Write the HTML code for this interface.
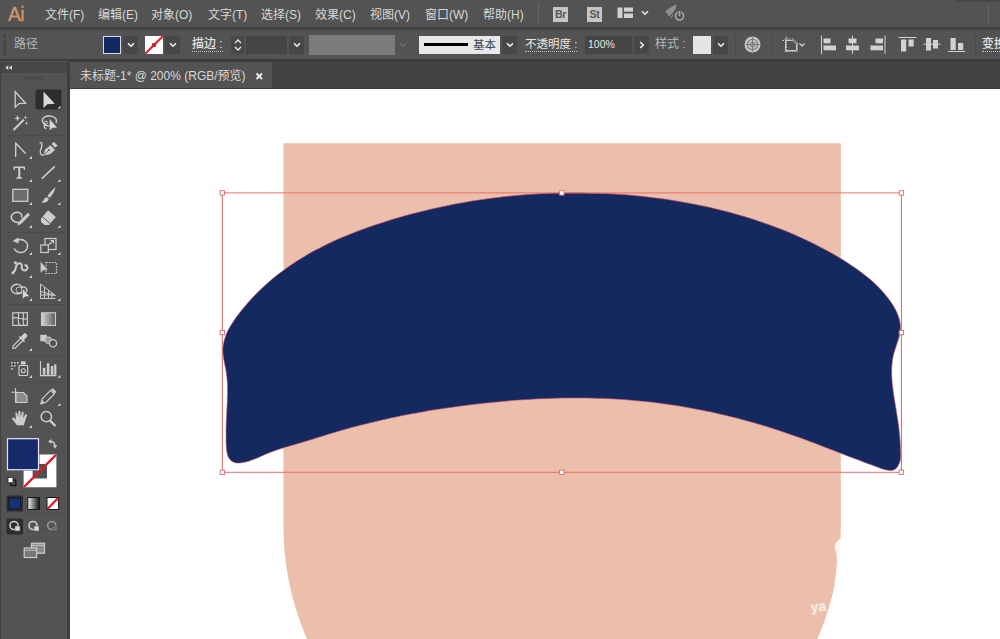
<!DOCTYPE html>
<html><head><meta charset="utf-8">
<style>
html,body{margin:0;padding:0;}
body{width:1000px;height:639px;overflow:hidden;position:relative;background:#535353;font-family:"Liberation Sans","Noto Sans CJK SC",sans-serif;font-size:12px;color:#d8d8d8;}
.abs{position:absolute;}
#menubar{left:0;top:0;width:1000px;height:28px;background:#535353;}
#menubar span.m{position:absolute;top:1px;line-height:28px;white-space:nowrap;}
#ctrl{left:0;top:29px;width:1000px;height:31px;background:#535353;}
#sep1{left:0;top:28px;width:1000px;height:1px;background:#3e3e3e;}
#sep2{left:0;top:60px;width:1000px;height:1px;background:#3a3a3a;}
#tabbar{left:70px;top:62px;width:930px;height:27px;background:#424242;}
#tab{left:70px;top:62px;width:202px;height:26px;background:#535353;}
#tabline{left:70px;top:88px;width:930px;height:1px;background:#3a3a3a;}
#canvas{left:70px;top:89px;width:930px;height:550px;background:#fff;overflow:hidden;}
#tools{left:0;top:61px;width:67px;height:578px;background:#535353;}
#toolhead{left:0;top:62px;width:67px;height:10.5px;background:#464646;}
#toolsep{left:67px;top:61px;width:3px;height:578px;background:#3e3e3e;}

#menubar{height:27px;}
#sep1{top:27px;height:3px;background:#434343;}
#ctrl{top:30px;height:29px;}
#sep2{top:59px;height:3px;background:#3c3c3c;}
.ct{position:absolute;white-space:nowrap;line-height:16px;top:36px;}
.dd{position:absolute;top:36px;height:18px;background:#474747;border-radius:0 2px 2px 0;}
.dd svg{position:absolute;left:50%;top:50%;margin:-3px 0 0 -4px;}
.inp{position:absolute;top:36px;height:18px;background:#454545;}
.ul{border-bottom:1px dotted #bbb;line-height:14px;top:37px;}
</style></head><body>
<div id="menubar" class="abs">
<span class="m" style="left:8px;top:0px;font-size:19.5px;color:#cf966a;letter-spacing:-0.8px;-webkit-text-stroke:0.3px #cf966a;">Ai</span>
<span class="m" style="left:45px">文件(F)</span>
<span class="m" style="left:98px">编辑(E)</span>
<span class="m" style="left:151px">对象(O)</span>
<span class="m" style="left:208px">文字(T)</span>
<span class="m" style="left:261px">选择(S)</span>
<span class="m" style="left:315px">效果(C)</span>
<span class="m" style="left:370px">视图(V)</span>
<span class="m" style="left:425px">窗口(W)</span>
<span class="m" style="left:483px">帮助(H)</span>
</div>
<div id="sep1" class="abs"></div>
<div id="ctrl" class="abs"></div>
<div id="ctrlitems">
<div class="abs" style="left:3px;top:33px;width:3px;height:23px;background:repeating-linear-gradient(#535353 0 1px,#3f3f3f 1px 2px);"></div>
<span class="ct" style="left:14px;color:#b4b4b4;">路径</span>
<div class="abs" style="left:103px;top:36px;width:16px;height:16px;background:#14295f;border:1px solid #d4dcec;"></div>
<div class="dd" style="left:123px;width:15px;"><svg width="8" height="6" viewBox="0 0 8 6"><path d="M1 1.2 L4 4.2 L7 1.2" fill="none" stroke="#f0f0f0" stroke-width="1.6"/></svg></div>
<div class="abs" style="left:145px;top:36px;width:18px;height:18px;background:#fff;overflow:hidden;"><svg width="18" height="18" viewBox="0 0 18 18" class="abs" style="left:0;top:0"><path d="M0 18 L18 0" stroke="#e0202c" stroke-width="2"/><circle cx="9" cy="9" r="2.3" fill="#c8202c"/></svg></div>
<div class="dd" style="left:165px;width:15px;"><svg width="8" height="6" viewBox="0 0 8 6"><path d="M1 1.2 L4 4.2 L7 1.2" fill="none" stroke="#f0f0f0" stroke-width="1.6"/></svg></div>
<span class="ct ul" style="left:192px;color:#e4e4e4;font-weight:500;">描边 :</span>
<div class="dd" style="left:231px;width:13px;border-radius:2px 0 0 2px;"><svg width="8" height="14" viewBox="0 0 8 14" style="margin:-7px 0 0 -4px"><path d="M1 5 L4 2 L7 5 M1 9 L4 12 L7 9" fill="none" stroke="#e8e8e8" stroke-width="1.4"/></svg></div>
<div class="inp" style="left:246px;width:41px;"></div>
<div class="dd" style="left:289px;width:15px;"><svg width="8" height="6" viewBox="0 0 8 6"><path d="M1 1.2 L4 4.2 L7 1.2" fill="none" stroke="#f0f0f0" stroke-width="1.6"/></svg></div>
<div class="abs" style="left:309px;top:35px;width:86px;height:20px;background:#7b7b7b;"></div>
<svg class="abs" style="left:399px;top:42px" width="8" height="6" viewBox="0 0 8 6"><path d="M1 1.2 L4 4.2 L7 1.2" fill="none" stroke="#6c6c6c" stroke-width="1.4"/></svg>
<div class="abs" style="left:419px;top:36px;width:81px;height:18px;background:#e8e8e8;"><div class="abs" style="left:5px;top:7px;width:44px;height:3px;background:#000;"></div><span class="abs" style="left:54px;top:1px;line-height:16px;color:#3a4656;font-size:11.5px;white-space:nowrap;">基本</span></div>
<div class="dd" style="left:502px;width:15px;"><svg width="8" height="6" viewBox="0 0 8 6"><path d="M1 1.2 L4 4.2 L7 1.2" fill="none" stroke="#f0f0f0" stroke-width="1.6"/></svg></div>
<span class="ct ul" style="left:525px;color:#e8e8e8;font-size:11.5px;">不透明度 :</span>
<div class="inp" style="left:585px;width:47px;"><span class="abs" style="left:3px;top:1px;line-height:14px;font-size:10.5px;color:#e6e6e6;">100%</span></div>
<div class="dd" style="left:634px;width:15px;"><svg width="6" height="8" viewBox="0 0 6 8" style="margin:-4px 0 0 -3px"><path d="M1.2 1 L4.2 4 L1.2 7" fill="none" stroke="#f0f0f0" stroke-width="1.6"/></svg></div>
<span class="ct" style="left:655px;color:#b8b8b8;">样式 :</span>
<div class="abs" style="left:693px;top:36px;width:18px;height:18px;background:#e4e4e4;"></div>
<div class="dd" style="left:713px;width:15px;"><svg width="8" height="6" viewBox="0 0 8 6"><path d="M1 1.2 L4 4.2 L7 1.2" fill="none" stroke="#f0f0f0" stroke-width="1.6"/></svg></div>
</div>
<div id="topicons">
<div class="abs" style="left:538px;top:3px;width:1px;height:21px;background:#666;"></div>
<div class="abs" style="left:553px;top:7px;width:15px;height:15px;background:#c6c6c6;color:#555;font-size:10.5px;font-weight:bold;line-height:15px;text-align:center;letter-spacing:-0.3px;">Br</div>
<div class="abs" style="left:587px;top:7px;width:15px;height:15px;background:#c6c6c6;color:#555;font-size:10.5px;font-weight:bold;line-height:15px;text-align:center;letter-spacing:-0.3px;">St</div>
<svg class="abs" style="left:617px;top:7px" width="17" height="12" viewBox="0 0 17 12"><rect x="0.5" y="0.5" width="5" height="10.5" fill="#d2d2d2"/><rect x="7" y="0.5" width="9" height="4.2" fill="#d2d2d2"/><rect x="7" y="6.5" width="9" height="4.5" fill="#d2d2d2"/></svg>
<svg class="abs" style="left:641px;top:10px" width="8" height="6" viewBox="0 0 8 6"><path d="M1 1.2 L4 4.2 L7 1.2" fill="none" stroke="#e8e8e8" stroke-width="1.6"/></svg>
<svg class="abs" style="left:664px;top:3px" width="22" height="20" viewBox="0 0 22 20"><path d="M2 8 L8 4 L12 2 L11 6 L8 10 L5 13 Z M6 7 L1 9 M9 11 L7 15" fill="#8e8e8e" stroke="#8e8e8e" stroke-width="1"/><circle cx="15.5" cy="13" r="4" fill="none" stroke="#a8a8a8" stroke-width="1.6"/><path d="M15.5 7.5 V13" stroke="#535353" stroke-width="3.2"/><path d="M15.5 8 V13" stroke="#a8a8a8" stroke-width="1.6"/></svg>
<div class="abs" style="left:988px;top:3px;width:1px;height:21px;background:#666;"></div>
<div class="abs" style="left:955px;top:0;width:45px;height:2px;background:#484848;"></div>
</div>
<div id="ctrlicons">
<div class="abs" style="left:735px;top:33px;width:1px;height:23px;background:#4a4a4a;"></div>
<svg class="abs" style="left:744px;top:36px" width="17" height="17" viewBox="0 0 17 17"><circle cx="8.5" cy="8.5" r="8" fill="#c4c4c4"/><circle cx="8.5" cy="8.5" r="5.2" fill="none" stroke="#7a7a7a" stroke-width="1.1"/><circle cx="8.5" cy="8.5" r="2.2" fill="none" stroke="#7a7a7a" stroke-width="1.1"/><path d="M8.5 1.5 V15.5 M1.5 8.5 H15.5" stroke="#7a7a7a" stroke-width="1"/></svg>
<div class="abs" style="left:772px;top:33px;width:1px;height:23px;background:#4a4a4a;"></div>
<svg class="abs" style="left:782px;top:36px" width="26" height="18" viewBox="0 0 26 18"><path d="M4.5 0.5 V16 M0.5 4.5 H9 M2.5 3 H11.5 L15.5 7 V15.5 H2.5" fill="none" stroke="#c8c8c8" stroke-width="1" stroke-dasharray="1.5 1"/><path d="M3.5 4.5 H11 L14.5 8 V14.5 H3.5 Z" fill="none" stroke="#c8c8c8" stroke-width="1"/><path d="M17.5 7.5 L20 10 L22.5 7.5" fill="none" stroke="#d0d0d0" stroke-width="1.3"/></svg>
<svg class="abs" style="left:818px;top:34px" width="150" height="22" viewBox="818 34 150 22" fill="#d2d2d2">
<rect x="821" y="35.5" width="1" height="18.5"/><rect x="823.5" y="38.5" width="7" height="4.8"/><rect x="823.5" y="45.5" width="12.5" height="4.8"/>
<rect x="852" y="35.5" width="1" height="18.5"/><rect x="848.5" y="38.5" width="8" height="4.8"/><rect x="846" y="45.5" width="13" height="4.8"/>
<rect x="884.5" y="35.5" width="1" height="18.5"/><rect x="875.5" y="38.5" width="7.5" height="4.8"/><rect x="870.5" y="45.5" width="12.5" height="4.8"/>
<rect x="898.5" y="37" width="18" height="1"/><rect x="901" y="39.5" width="5.2" height="12"/><rect x="908.5" y="39.5" width="5.2" height="7"/>
<rect x="923.5" y="43.7" width="17" height="1"/><rect x="926" y="38" width="5" height="12.5"/><rect x="933" y="40" width="5" height="8.5"/>
<rect x="948" y="51" width="17" height="1"/><rect x="950.5" y="38" width="5.2" height="12"/><rect x="958" y="43" width="5.2" height="7"/>
</svg>
<div class="abs" style="left:975px;top:33px;width:1px;height:23px;background:#4a4a4a;"></div>
<span class="ct ul" style="left:982px;color:#e4e4e4;font-weight:500;">变换</span>
</div>
<div id="sep2" class="abs"></div>
<div id="tabbar" class="abs"></div>
<div id="tab" class="abs"><span class="abs" style="left:10px;top:0px;line-height:28px;white-space:nowrap;">未标题-1* @ 200% (RGB/预览)</span><svg class="abs" style="left:185px;top:10px" width="9" height="9" viewBox="0 0 9 9"><path d="M1.5 1.5 L7 7 M7 1.5 L1.5 7" stroke="#f0f0f0" stroke-width="1.8"/></svg></div>
<div id="tabline" class="abs"></div>
<div id="tools" class="abs"></div>
<div id="toolhead" class="abs"></div>
<div id="toolsep" class="abs"></div>
<svg id="toolsvg" class="abs" style="left:0;top:61px" width="70" height="578" viewBox="0 61 70 578">
<rect x="0" y="61" width="1.2" height="578" fill="#414141"/><path d="M8.3 65.3 L5.3 67.7 L8.3 70.1 Z M12 65.3 L9 67.7 L12 70.1 Z" fill="#d6d6d6"/><g fill="#424242"><rect x="24" y="76" width="1" height="3.5"/><rect x="26" y="76" width="1" height="3.5"/><rect x="28" y="76" width="1" height="3.5"/><rect x="30" y="76" width="1" height="3.5"/><rect x="32" y="76" width="1" height="3.5"/><rect x="34" y="76" width="1" height="3.5"/><rect x="36" y="76" width="1" height="3.5"/><rect x="38" y="76" width="1" height="3.5"/><rect x="40" y="76" width="1" height="3.5"/><rect x="42" y="76" width="1" height="3.5"/></g><path d="M15.2 91.8 L15.2 107.3 L19 103.6 L25.6 103.2 Z" fill="none" stroke="#cdcdcd" stroke-width="1.3" stroke-linejoin="miter"/><rect x="35.5" y="89.5" width="26" height="20" rx="2" fill="#2d2d2d"/><path d="M43.5 91.5 L43.5 108 L47.4 104.2 L54.8 103.8 Z" fill="#d8d8d8"/><path d="M60.5 108.5 L57.5 108.5 L60.5 105.5 Z" fill="#d0d0d0"/><path d="M13.5 130 L24 119.5" stroke="#cdcdcd" stroke-width="2"/><path d="M17.5 115 L18.4 117.4 L20.8 118.2 L18.4 119 L17.5 121.5 L16.6 119 L14.2 118.2 L16.6 117.4 Z M25.5 115.5 L26 117 L27.5 117.5 L26 118 L25.5 119.5 L25 118 L23.5 117.5 L25 117 Z M26.5 121.5 L27 122.8 L28.3 123.3 L27 123.8 L26.5 125 L26 123.8 L24.7 123.3 L26 122.8Z" fill="#cdcdcd"/><path d="M50 126 C42 126 39.5 118 46.5 116.3 C53 115 58 118.5 56 123 M45.5 123.5 C43.5 125 43.8 128 46.3 128.8" fill="none" stroke="#cdcdcd" stroke-width="1.4"/><circle cx="46" cy="122.6" r="1.5" fill="none" stroke="#cdcdcd" stroke-width="1"/><path d="M49.3 118.5 L49.3 131 L52.2 128.2 L57.6 127.8 Z" fill="#d8d8d8" stroke="#535353" stroke-width="0.6"/><path d="M15.6 157 L15.8 143.2 L25.6 153.5" fill="none" stroke="#cdcdcd" stroke-width="1.4"/><path d="M32.0 159.0 L29.0 159.0 L32.0 156.0 Z" fill="#d0d0d0"/><path d="M39.5 143 C43 141 42 147 40.5 150 C39.5 153 41 155.5 44 155" fill="none" stroke="#cdcdcd" stroke-width="1.3"/><path d="M43.5 155.5 L45 149.5 L50.5 145.2 L55 149.7 L50.6 154 Z" fill="#cdcdcd"/><path d="M51.5 144 L53.8 141.8 L57.6 145.6 L55.4 147.8 Z" fill="#cdcdcd"/><path d="M44 155 L48.5 150.5" stroke="#535353" stroke-width="0.9"/><circle cx="49" cy="150" r="1" fill="#535353"/><path d="M13.5 166.5 H25 V170 H24 L23.3 168 H20.3 V177 L22.3 177.7 V178.7 H16.2 V177.7 L18.2 177 V168 H15.2 L14.5 170 H13.5 Z" fill="#cdcdcd"/><path d="M32.0 182.0 L29.0 182.0 L32.0 179.0 Z" fill="#d0d0d0"/><path d="M41.8 178.6 L54.8 166.4" stroke="#cdcdcd" stroke-width="1.5"/><path d="M60.5 182.0 L57.5 182.0 L60.5 179.0 Z" fill="#d0d0d0"/><rect x="12.8" y="189.3" width="15" height="12" fill="#6d6d6d" stroke="#cdcdcd" stroke-width="1.3"/><path d="M32.0 205.0 L29.0 205.0 L32.0 202.0 Z" fill="#d0d0d0"/><path d="M55.3 187.6 C54 188 49 193.5 47.5 196.2 L49.8 198 C52 195.5 55.5 190 55.3 187.6 Z" fill="#cdcdcd"/><path d="M46.7 197.2 L48.8 199 C48.3 202 44 203.3 41.2 202.6 C43.6 201.5 43.5 198.2 46.7 197.2 Z" fill="#cdcdcd"/><path d="M60.5 205.0 L57.5 205.0 L60.5 202.0 Z" fill="#d0d0d0"/><path d="M19.5 222.3 C13 223.5 8.5 217 13.5 213.5 C18.5 210.5 23.5 214.2 21.3 217.5" fill="none" stroke="#cdcdcd" stroke-width="1.5"/><path d="M17.5 225.5 L18.7 222 L27.8 212.8 L30 215 L20.8 224.2 Z" fill="#cdcdcd"/><path d="M32.0 228.0 L29.0 228.0 L32.0 225.0 Z" fill="#d0d0d0"/><path d="M48 210.3 L55.8 217 L49 225 L44.5 225 L41 222 L41 218.6 Z" fill="#cdcdcd"/><path d="M42.5 216.8 L50.2 223.6" stroke="#535353" stroke-width="1"/><path d="M60.5 228.0 L57.5 228.0 L60.5 225.0 Z" fill="#d0d0d0"/><path d="M17 240.2 C24 237.5 29.5 243.5 26.8 249 C24 254 16.5 253.5 14.2 248.5" fill="none" stroke="#cdcdcd" stroke-width="1.5"/><path d="M12.5 241 L18.3 237.4 L18.6 243.6 Z" fill="#cdcdcd"/><path d="M32.0 255.0 L29.0 255.0 L32.0 252.0 Z" fill="#d0d0d0"/><rect x="45" y="238.5" width="11" height="11" fill="none" stroke="#cdcdcd" stroke-width="1.2"/><rect x="40.8" y="245" width="7.5" height="7.5" fill="#535353" stroke="#cdcdcd" stroke-width="1.2"/><path d="M48.5 245 L53.5 240.5 M50.5 240.5 H53.5 V243.5" fill="none" stroke="#cdcdcd" stroke-width="1.1"/><path d="M60.5 255.0 L57.5 255.0 L60.5 252.0 Z" fill="#d0d0d0"/><path d="M13 272.5 C17 271 14.5 266.5 17.5 264 C20 262 22.5 264 21.8 266.5 C21 269.5 24.5 271.8 26.7 269.5 C28.8 267.3 26.5 264.5 24.5 265.7" fill="none" stroke="#cdcdcd" stroke-width="2"/><circle cx="15.5" cy="262.8" r="1.6" fill="#cdcdcd"/><circle cx="12.8" cy="273" r="1.4" fill="#cdcdcd"/><path d="M32.0 278.0 L29.0 278.0 L32.0 275.0 Z" fill="#d0d0d0"/><rect x="46" y="262.5" width="10.5" height="11" fill="none" stroke="#cdcdcd" stroke-width="1.2" stroke-dasharray="1.6 1.2"/><path d="M40.3 261 L40.3 273.2 L43.2 270.4 L48 270 Z" fill="#cdcdcd" stroke="#535353" stroke-width="0.5"/><path d="M22 292.5 C14 296 9 290.5 12.5 286.3 C15.5 283 21 284 22 287.5 C25 286 28.3 289.2 26 292" fill="none" stroke="#cdcdcd" stroke-width="1.4"/><circle cx="19" cy="290" r="3" fill="none" stroke="#cdcdcd" stroke-width="0.9"/><path d="M22.5 288.5 L22.5 299.3 L25.2 296.8 L29.6 296.5 Z" fill="#d8d8d8" stroke="#535353" stroke-width="0.5"/><path d="M32.0 301.0 L29.0 301.0 L32.0 298.0 Z" fill="#d0d0d0"/><path d="M40.5 284 V298.5 M40.5 284 L55.5 295.5 M40.5 298.5 H55.5 M40.5 291.5 L55.5 295.5 M44.5 287 V298.5 M48.5 290 V298.5 M52 292.8 V298.5 M40.5 295 H55" fill="none" stroke="#cdcdcd" stroke-width="1"/><path d="M60.5 301.0 L57.5 301.0 L60.5 298.0 Z" fill="#d0d0d0"/><rect x="6" y="135" width="58" height="1" fill="#4b4b4b"/><rect x="6" y="232" width="58" height="1" fill="#4b4b4b"/><rect x="6" y="304" width="58" height="1" fill="#4c4c4c"/><rect x="12.8" y="312.8" width="14.6" height="12.6" fill="none" stroke="#cdcdcd" stroke-width="1.2"/><path d="M12.8 318 C17 316 22 321 27.4 318.5 M18 312.8 C20 316 16.5 321 19.5 325.4 M23 312.8 C24.5 317 22 321 24 325.4" fill="none" stroke="#cdcdcd" stroke-width="1.1"/><defs><linearGradient id="gtool" x1="0" x2="1" y1="0" y2="0"><stop offset="0" stop-color="#d6d6d6"/><stop offset="1" stop-color="#5a5a5a"/></linearGradient></defs><rect x="41.5" y="312.8" width="14" height="12.6" fill="url(#gtool)" stroke="#cdcdcd" stroke-width="1.1"/><path d="M12.8 348.3 L13 346 L21.2 337.8 L23.4 340 L15.2 348.2 Z" fill="none" stroke="#cdcdcd" stroke-width="1.2"/><path d="M20.5 337 L24 333.5 C25.5 332.5 28.2 335.2 27 336.8 L23.8 340.2 Z" fill="#cdcdcd"/><path d="M19.3 336.6 L24.6 341.8" stroke="#cdcdcd" stroke-width="1.5"/><path d="M32.0 351.0 L29.0 351.0 L32.0 348.0 Z" fill="#d0d0d0"/><rect x="40.3" y="334.8" width="6.5" height="6.5" fill="#cdcdcd"/><circle cx="48.3" cy="340.2" r="3.4" fill="#9a9a9a" stroke="#cdcdcd" stroke-width="0.8"/><circle cx="53" cy="343.2" r="3.6" fill="#535353" stroke="#cdcdcd" stroke-width="1.3"/><rect x="6" y="355.5" width="58" height="1" fill="#4c4c4c"/><rect x="19" y="365.5" width="8.6" height="10" rx="0.8" fill="none" stroke="#cdcdcd" stroke-width="1.2"/><rect x="21" y="361.3" width="4.6" height="3.2" fill="#cdcdcd"/><circle cx="23.3" cy="370.7" r="2" fill="none" stroke="#cdcdcd" stroke-width="1.1"/><g fill="#cdcdcd"><rect x="11" y="362" width="1.6" height="1.6"/><rect x="14" y="362" width="1.6" height="1.6"/><rect x="17" y="362" width="1.6" height="1.6"/><rect x="11" y="365" width="1.6" height="1.6"/><rect x="14" y="365" width="1.6" height="1.6"/><rect x="11" y="368" width="1.6" height="1.6"/></g><path d="M32.0 378.0 L29.0 378.0 L32.0 375.0 Z" fill="#d0d0d0"/><path d="M40.5 361 V375.6 H56.5" fill="none" stroke="#cdcdcd" stroke-width="1.1"/><g fill="#cdcdcd"><rect x="42.8" y="367.8" width="2.6" height="7"/><rect x="46.8" y="363.2" width="2.6" height="11.6"/><rect x="50.8" y="366" width="2.6" height="8.8"/><rect x="54.2" y="364.3" width="2.2" height="10.5"/></g><path d="M60.5 378.0 L57.5 378.0 L60.5 375.0 Z" fill="#d0d0d0"/><rect x="6" y="382" width="58" height="1" fill="#4c4c4c"/><path d="M15.5 388 V402.8 M11.3 392.3 H18 " fill="none" stroke="#cdcdcd" stroke-width="1.1"/><path d="M16 392.5 H23.5 L27 396 V402.5 H16 Z" fill="#8a8a8a" stroke="#cdcdcd" stroke-width="1.1"/><path d="M40.8 403.8 L42.3 398.8 L50.5 390.3 L54.3 394 L46 402.2 Z" fill="none" stroke="#cdcdcd" stroke-width="1.2"/><path d="M51 389.8 L52.8 388.2 L56.5 391.8 L54.8 393.5 Z" fill="#cdcdcd"/><path d="M40.8 403.8 L42 400 L44.8 402.7 Z" fill="#cdcdcd"/><path d="M60.5 406.0 L57.5 406.0 L60.5 403.0 Z" fill="#d0d0d0"/><path d="M17 425.3 C15.5 423 13.5 420.8 12.3 419.2 C11.6 418 13.2 417 14.3 418 L16 419.8 L15.4 413.6 C15.3 412.2 17 412 17.3 413.4 L18.2 417.4 L18.4 411.8 C18.5 410.4 20.3 410.4 20.4 411.8 L20.7 417.3 L21.8 412.5 C22.1 411.2 23.8 411.5 23.7 412.9 L23 418.2 L25.2 414.8 C25.9 413.8 27.4 414.6 26.9 415.8 C25.8 418.5 25 421.5 23.8 425.3 Z" fill="#cdcdcd"/><path d="M32.0 428.0 L29.0 428.0 L32.0 425.0 Z" fill="#d0d0d0"/><circle cx="46.3" cy="416.6" r="5.2" fill="none" stroke="#cdcdcd" stroke-width="1.5"/><path d="M50 420.6 L55.5 426" stroke="#cdcdcd" stroke-width="2.3"/><path d="M23.6 454.5 H56.4 V487.3 H23.6 Z M32.8 464 V478.3 H47 V464 Z" fill="#fff" fill-rule="evenodd"/><path d="M32.8 464 H47 V478.3 H32.8 Z" fill="#505050"/><clipPath id="cs"><rect x="23.6" y="454.5" width="32.8" height="32.8"/></clipPath><path d="M23.6 487.3 L56.4 454.5" stroke="#e01824" stroke-width="2.4" clip-path="url(#cs)"/><rect x="6.5" y="437.7" width="33" height="33" fill="#535353"/><rect x="7.5" y="438.7" width="31" height="31" fill="#16296a" stroke="#dfe6f2" stroke-width="1.2"/><path d="M50.5 441.5 C53.5 441.5 55 443 55 446" fill="none" stroke="#cdcdcd" stroke-width="1.3"/><path d="M51.3 439 L48.2 441.5 L51.3 444 Z M52.8 445.2 L55 448.6 L57.3 445.2 Z" fill="#cdcdcd"/><rect x="10.8" y="480" width="5" height="5.5" fill="#535353" stroke="#111" stroke-width="1.2"/><rect x="8" y="477.3" width="5" height="5.5" fill="#fff" stroke="#222" stroke-width="0.8"/><rect x="6.5" y="495.5" width="16.5" height="16" rx="1.5" fill="#2d2d2d"/><rect x="9" y="498" width="11.5" height="11" fill="#173278" stroke="#0a1020" stroke-width="0.8"/><defs><linearGradient id="gbtn" x1="0" x2="1" y1="0" y2="0"><stop offset="0" stop-color="#f0f0f0"/><stop offset="1" stop-color="#111"/></linearGradient></defs><rect x="27.8" y="497.5" width="11.6" height="12" fill="url(#gbtn)" stroke="#1a1a1a" stroke-width="1"/><rect x="47" y="497.5" width="11.6" height="12" fill="#fff" stroke="#1a1a1a" stroke-width="1"/><path d="M47.5 509 L58.1 498" stroke="#e01824" stroke-width="2.2"/><rect x="6.5" y="518.5" width="16.5" height="16" rx="1.5" fill="#2d2d2d"/><g opacity="1"><circle cx="14.0" cy="525.5" r="4" fill="none" stroke="#cdcdcd" stroke-width="1.6"/><rect x="15.0" y="526" width="5" height="5" fill="#d8d8d8" stroke="#535353" stroke-width="0.5"/></g><g opacity="1"><circle cx="33.0" cy="525.5" r="4" fill="none" stroke="#cdcdcd" stroke-width="1.6"/><rect x="34.0" y="526" width="5" height="5" fill="#d8d8d8" stroke="#535353" stroke-width="0.5"/></g><g opacity="0.55"><circle cx="51.7" cy="525.5" r="4" fill="none" stroke="#cdcdcd" stroke-width="1.6"/><rect x="52.7" y="526" width="5" height="5" fill="#888" stroke="#535353" stroke-width="0.5"/></g><rect x="24.5" y="518.5" width="38" height="16" rx="1.5" fill="none" stroke="#5c5c5c" stroke-width="0.8"/><rect x="31.5" y="543.2" width="13" height="10" fill="#8a8a8a" stroke="#cdcdcd" stroke-width="1.2"/><rect x="24.2" y="548" width="12.5" height="9.5" fill="#777" stroke="#cdcdcd" stroke-width="1.2"/><path d="M24.2 550.3 H36.7 M31.5 545.3 H44.5" stroke="#cdcdcd" stroke-width="0.9"/></svg>
<div id="canvas" class="abs">
<svg class="abs" style="left:0;top:0" width="930" height="550" viewBox="70 89 930 550">
<path d="M283.5 143.2 H840.8 V526 A278.6 278.6 0 0 1 283.5 528 Z" fill="#ebbfab"/>
<path d="M841.5 538 C836 540 833 546 836 552 C838 560 836 570 834.5 584 L838 600 L842 600 Z" fill="#fff" opacity="0.85"/>
<text x="811" y="612" font-family="Liberation Sans, sans-serif" font-size="14" font-weight="bold" fill="#fff" opacity="0.75" transform="rotate(-6 811 612)">ya</text>
<path id="navy" d="M222.8 349.8C222.9 346.3 223.5 342.9 224.4 339.6C225.3 336.3 226.7 333.0 228.3 329.8C229.9 326.7 231.9 323.6 234.0 320.5C236.0 317.5 238.2 314.5 240.5 311.7C242.7 308.8 245.1 306.0 247.5 303.2C249.8 300.5 252.3 297.8 254.8 295.2C257.3 292.6 259.9 290.1 262.5 287.7C265.1 285.2 267.8 282.8 270.5 280.5C273.2 278.2 276.0 276.0 278.8 273.8C281.6 271.6 284.5 269.5 287.4 267.4C290.3 265.4 293.2 263.4 296.2 261.5C299.2 259.6 302.3 257.7 305.3 255.9C308.4 254.1 311.5 252.3 314.6 250.6C317.8 248.9 320.9 247.3 324.1 245.7C327.3 244.1 330.6 242.6 333.8 241.1C337.1 239.6 340.4 238.2 343.7 236.8C347.0 235.4 350.3 234.0 353.7 232.7C357.0 231.4 360.4 230.1 363.8 228.9C367.1 227.6 370.6 226.5 374.0 225.3C377.4 224.1 380.8 223.0 384.3 221.9C387.7 220.9 391.1 219.8 394.6 218.8C398.1 217.8 401.5 216.8 405.0 215.8C408.5 214.8 412.0 213.9 415.4 213.0C418.9 212.1 422.4 211.2 425.9 210.4C429.4 209.5 432.9 208.7 436.4 208.0C439.9 207.2 443.4 206.4 447.0 205.7C450.5 205.0 454.0 204.3 457.5 203.6C461.1 203.0 464.6 202.3 468.1 201.7C471.7 201.1 475.2 200.6 478.8 200.0C482.3 199.5 485.9 199.0 489.4 198.5C493.0 198.0 496.5 197.6 500.1 197.2C503.6 196.7 507.2 196.4 510.8 196.0C514.3 195.6 517.9 195.3 521.5 195.0C525.0 194.7 528.6 194.4 532.2 194.2C535.8 194.0 539.3 193.8 542.9 193.6C546.5 193.4 550.1 193.3 553.7 193.1C557.2 193.0 560.8 192.9 564.4 192.9C568.0 192.8 571.6 192.8 575.1 192.8C578.7 192.8 582.3 192.8 585.9 192.9C589.5 193.0 593.1 193.1 596.6 193.2C600.2 193.3 603.8 193.5 607.4 193.6C611.0 193.8 614.6 194.0 618.1 194.3C621.7 194.5 625.3 194.8 628.9 195.1C632.4 195.4 636.0 195.7 639.6 196.1C643.2 196.5 646.7 196.9 650.3 197.3C653.9 197.7 657.4 198.2 661.0 198.6C664.6 199.1 668.1 199.7 671.7 200.2C675.2 200.8 678.8 201.3 682.3 202.0C685.8 202.6 689.4 203.2 692.9 203.9C696.4 204.6 699.9 205.3 703.5 206.1C707.0 206.8 710.5 207.6 714.0 208.4C717.5 209.2 721.0 210.1 724.4 211.0C727.9 211.9 731.4 212.8 734.8 213.8C738.3 214.7 741.7 215.7 745.2 216.8C748.6 217.8 752.0 218.9 755.4 220.0C758.8 221.1 762.2 222.3 765.6 223.5C769.0 224.7 772.4 225.9 775.7 227.2C779.1 228.4 782.4 229.7 785.8 231.1C789.1 232.5 792.4 233.8 795.7 235.3C799.0 236.7 802.3 238.2 805.5 239.7C808.8 241.2 812.0 242.8 815.2 244.4C818.4 246.0 821.6 247.7 824.8 249.4C827.9 251.1 831.0 252.8 834.1 254.6C837.2 256.4 840.3 258.2 843.3 260.1C846.4 262.0 849.4 264.0 852.3 266.0C855.3 268.0 858.2 270.0 861.1 272.2C863.9 274.3 866.7 276.5 869.5 278.8C872.2 281.1 874.8 283.5 877.4 286.1C879.9 288.6 882.4 291.2 884.7 294.0C887.1 296.8 889.4 299.7 891.4 302.8C893.4 305.8 895.4 309.0 896.8 312.3C898.2 315.6 899.5 319.0 900.0 322.4C900.6 325.8 900.6 329.2 900.1 332.7C899.6 336.1 898.3 339.6 897.2 343.1C896.2 346.6 894.7 350.1 893.8 353.6C892.9 357.1 892.3 360.6 892.0 364.2C891.6 367.7 891.6 371.2 891.7 374.8C891.8 378.3 892.1 381.9 892.5 385.4C892.9 389.0 893.4 392.6 893.9 396.2C894.5 399.7 895.1 403.3 895.7 406.9C896.3 410.5 896.9 414.1 897.4 417.6C898.0 421.1 898.5 424.6 898.9 428.1C899.3 431.6 899.6 435.0 899.9 438.6C900.1 442.1 900.5 445.8 900.5 449.5C900.6 453.2 901.1 457.5 900.1 460.9C899.2 464.2 897.2 468.1 894.7 469.6C892.2 471.0 888.3 470.3 885.0 469.7C881.7 469.1 878.1 467.3 874.7 466.1C871.3 464.9 867.9 463.6 864.6 462.4C861.2 461.1 857.8 459.8 854.4 458.6C851.1 457.3 847.7 456.0 844.4 454.7C841.0 453.4 837.7 452.1 834.3 450.8C831.0 449.5 827.6 448.2 824.3 446.9C820.9 445.6 817.6 444.4 814.3 443.1C810.9 441.8 807.6 440.6 804.2 439.3C800.8 438.1 797.5 436.9 794.1 435.7C790.7 434.5 787.3 433.3 783.9 432.2C780.5 431.0 777.1 429.9 773.7 428.8C770.3 427.7 766.9 426.7 763.4 425.6C760.0 424.6 756.5 423.6 753.1 422.6C749.6 421.6 746.2 420.7 742.7 419.7C739.2 418.8 735.8 417.9 732.3 417.0C728.8 416.2 725.3 415.3 721.8 414.5C718.3 413.7 714.8 412.9 711.3 412.1C707.8 411.4 704.2 410.7 700.7 410.0C697.2 409.3 693.7 408.6 690.1 408.0C686.6 407.3 683.1 406.7 679.5 406.1C676.0 405.6 672.4 405.0 668.9 404.5C665.3 404.0 661.8 403.5 658.2 403.0C654.6 402.6 651.1 402.2 647.5 401.8C643.9 401.4 640.4 401.0 636.8 400.7C633.2 400.4 629.7 400.1 626.1 399.8C622.5 399.5 618.9 399.3 615.3 399.1C611.8 398.9 608.2 398.7 604.6 398.6C601.0 398.4 597.4 398.3 593.9 398.2C590.3 398.1 586.7 398.0 583.1 398.0C579.5 398.0 575.9 398.0 572.3 398.0C568.8 398.0 565.2 398.0 561.6 398.1C558.0 398.2 554.4 398.3 550.8 398.4C547.2 398.5 543.7 398.7 540.1 398.8C536.5 399.0 532.9 399.2 529.3 399.4C525.7 399.6 522.1 399.8 518.6 400.1C515.0 400.3 511.4 400.6 507.8 400.9C504.2 401.2 500.7 401.5 497.1 401.9C493.5 402.2 489.9 402.6 486.4 403.0C482.8 403.3 479.2 403.7 475.7 404.2C472.1 404.6 468.5 405.0 465.0 405.5C461.4 405.9 457.9 406.4 454.3 406.9C450.7 407.4 447.2 407.9 443.6 408.4C440.1 408.9 436.6 409.5 433.0 410.1C429.5 410.7 425.9 411.2 422.4 411.9C418.9 412.5 415.3 413.1 411.8 413.8C408.3 414.5 404.8 415.1 401.3 415.8C397.7 416.6 394.2 417.3 390.7 418.0C387.2 418.8 383.7 419.6 380.2 420.4C376.7 421.2 373.2 422.0 369.7 422.9C366.3 423.7 362.8 424.6 359.3 425.5C355.8 426.4 352.4 427.3 348.9 428.3C345.4 429.3 342.0 430.2 338.5 431.2C335.1 432.3 331.6 433.3 328.2 434.3C324.8 435.4 321.3 436.5 317.9 437.5C314.5 438.6 311.0 439.7 307.6 440.7C304.2 441.7 300.7 442.8 297.3 443.8C293.9 444.8 290.5 445.7 287.1 446.8C283.6 447.8 280.2 448.9 276.8 450.0C273.4 451.2 270.1 452.5 266.7 453.8C263.4 455.2 260.1 456.8 256.7 458.2C253.3 459.5 249.9 461.0 246.4 461.8C242.8 462.6 238.5 463.5 235.5 462.8C232.5 462.1 230.0 460.2 228.5 457.5C227.0 454.9 226.7 450.8 226.3 447.1C225.9 443.4 226.1 439.1 226.1 435.4C226.0 431.6 226.1 428.1 226.2 424.5C226.3 421.0 226.5 417.6 226.6 414.1C226.8 410.7 227.0 407.2 227.2 403.7C227.3 400.1 227.5 396.6 227.5 393.0C227.5 389.4 227.5 385.7 227.3 382.1C227.1 378.5 226.6 374.8 226.1 371.2C225.5 367.6 224.5 363.9 224.0 360.4C223.4 356.8 222.8 353.3 222.8 349.8Z" fill="#14295f" stroke="#c8506a" stroke-width="0.6"/>
<path d="M222.3 192.9 H901.4 M222.3 472.3 H901.4" stroke="#ee6e66" stroke-width="1" fill="none"/>
<path d="M222.3 192.9 V472.3 M901.4 192.9 V472.3" stroke="#cc6662" stroke-width="1" fill="none"/>
<rect x="220.1" y="190.7" width="4.4" height="4.4" fill="#fff" stroke="#d86a74" stroke-width="0.9"/>
<rect x="220.1" y="330.4" width="4.4" height="4.4" fill="#fff" stroke="#d86a74" stroke-width="0.9"/>
<rect x="220.1" y="470.1" width="4.4" height="4.4" fill="#fff" stroke="#d86a74" stroke-width="0.9"/>
<rect x="559.6" y="190.7" width="4.4" height="4.4" fill="#fff" stroke="#d86a74" stroke-width="0.9"/>
<rect x="559.6" y="470.1" width="4.4" height="4.4" fill="#fff" stroke="#d86a74" stroke-width="0.9"/>
<rect x="899.2" y="190.7" width="4.4" height="4.4" fill="#fff" stroke="#d86a74" stroke-width="0.9"/>
<rect x="899.2" y="330.4" width="4.4" height="4.4" fill="#fff" stroke="#d86a74" stroke-width="0.9"/>
<rect x="899.2" y="470.1" width="4.4" height="4.4" fill="#fff" stroke="#d86a74" stroke-width="0.9"/>
</svg>
</div>
</body></html>
